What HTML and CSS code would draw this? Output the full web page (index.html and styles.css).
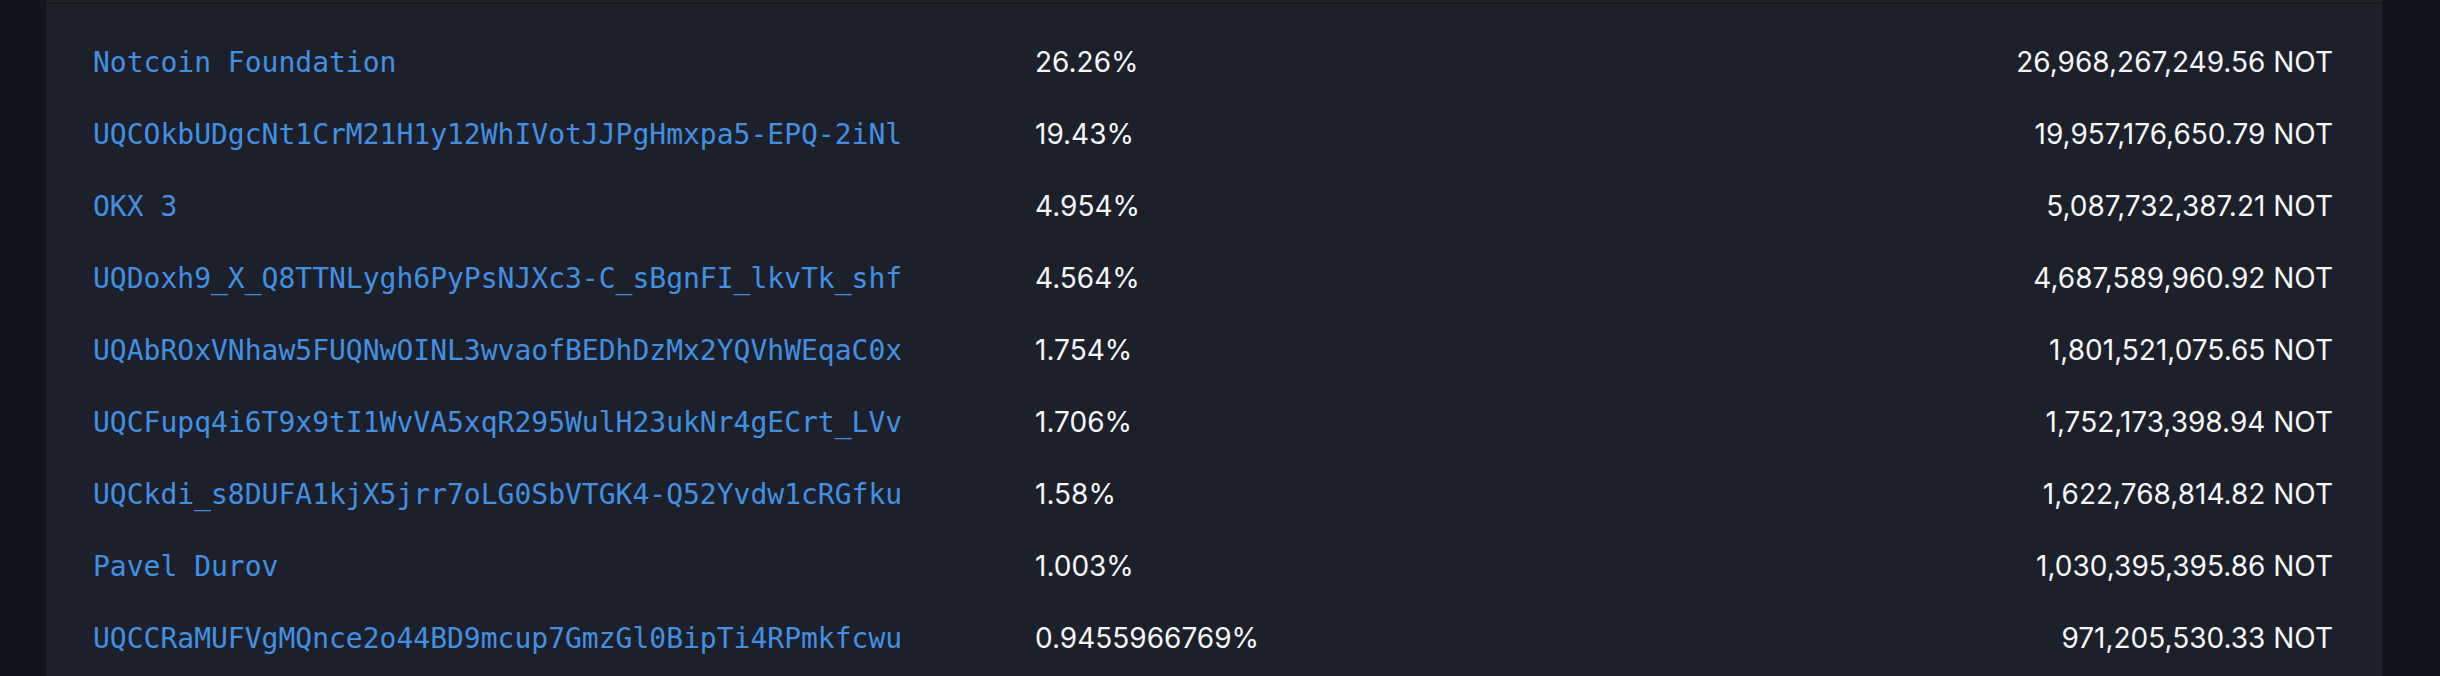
FILE: index.html
```html
<!DOCTYPE html>
<html>
<head>
<meta charset="utf-8">
<link rel="stylesheet" href="styles.css">
</head>
<body>
<div class="page">
  <div class="card">
    <div class="card-top"></div>
    <div class="holders">
      <div class="row"><a class="addr">Notcoin Foundation</a><span class="pct">26.26%</span><span class="amt">26,968,267,249.56 NOT</span></div>
      <div class="row"><a class="addr">UQCOkbUDgcNt1CrM21H1y12WhIVotJJPgHmxpa5-EPQ-2iNl</a><span class="pct">19.43%</span><span class="amt">19,957,176,650.79 NOT</span></div>
      <div class="row"><a class="addr">OKX 3</a><span class="pct">4.954%</span><span class="amt">5,087,732,387.21 NOT</span></div>
      <div class="row"><a class="addr">UQDoxh9_X_Q8TTNLygh6PyPsNJXc3-C_sBgnFI_lkvTk_shf</a><span class="pct">4.564%</span><span class="amt">4,687,589,960.92 NOT</span></div>
      <div class="row"><a class="addr">UQAbROxVNhaw5FUQNwOINL3wvaofBEDhDzMx2YQVhWEqaC0x</a><span class="pct">1.754%</span><span class="amt">1,801,521,075.65 NOT</span></div>
      <div class="row"><a class="addr">UQCFupq4i6T9x9tI1WvVA5xqR295WulH23ukNr4gECrt_LVv</a><span class="pct">1.706%</span><span class="amt">1,752,173,398.94 NOT</span></div>
      <div class="row"><a class="addr">UQCkdi_s8DUFA1kjX5jrr7oLG0SbVTGK4-Q52Yvdw1cRGfku</a><span class="pct">1.58%</span><span class="amt">1,622,768,814.82 NOT</span></div>
      <div class="row"><a class="addr">Pavel Durov</a><span class="pct">1.003%</span><span class="amt">1,030,395,395.86 NOT</span></div>
      <div class="row"><a class="addr">UQCCRaMUFVgMQnce2o44BD9mcup7GmzGl0BipTi4RPmkfcwu</a><span class="pct">0.9455966769%</span><span class="amt">971,205,530.33 NOT</span></div>
    </div>
  </div>
</div>
</body>
</html>
```

FILE: styles.css
```css
html, body {
  margin: 0;
  padding: 0;
  background: #12151b;
  height: 676px;
  overflow: hidden;
}

.page {
  padding: 0 58px 0 46px;
}

.card {
  background: #1c202b;
  min-height: 700px;
}

.card-top {
  height: 2px;
  background: #1f232c;
  border-bottom: 2px solid #161920;
}

.holders {
  padding: 22px 49px 0 47px;
}

.row {
  display: grid;
  grid-template-columns: 942px 1fr auto;
  align-items: center;
  height: 72px;
}

.addr {
  font-family: "DejaVu Sans Mono", monospace;
  font-size: 28px;
  color: #4390e0;
  white-space: nowrap;
}

.pct, .amt {
  font-family: Inter, "Liberation Sans", sans-serif;
  font-size: 28px;
  color: #f6f7f8;
  white-space: nowrap;
}

.amt {
  text-align: right;
}
```
